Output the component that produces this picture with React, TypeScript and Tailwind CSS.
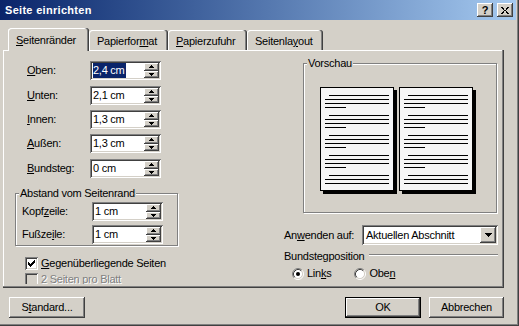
import React from "react";

// classic 3D bevels
const raised = "shadow-[inset_-1px_-1px_#404040,inset_1px_1px_#fff,inset_-2px_-2px_#808080]";
const sunken = "shadow-[inset_1px_1px_#808080,inset_-1px_-1px_#fff,inset_2px_2px_#404040,inset_-2px_-2px_#d4d0c8]";
const etched = "border border-[#808080] shadow-[1px_1px_#fff,inset_1px_1px_#fff]";

function UpArrow() {
  return (
    <svg width="5" height="3" shapeRendering="crispEdges">
      <rect x="2" y="0" width="1" height="1" fill="#000" />
      <rect x="1" y="1" width="3" height="1" fill="#000" />
      <rect x="0" y="2" width="5" height="1" fill="#000" />
    </svg>
  );
}

function DownArrow({ w = 5 }: { w?: number }) {
  if (w === 7) {
    return (
      <svg width="7" height="4" shapeRendering="crispEdges">
        <rect x="0" y="0" width="7" height="1" fill="#000" />
        <rect x="1" y="1" width="5" height="1" fill="#000" />
        <rect x="2" y="2" width="3" height="1" fill="#000" />
        <rect x="3" y="3" width="1" height="1" fill="#000" />
      </svg>
    );
  }
  return (
    <svg width="5" height="3" shapeRendering="crispEdges">
      <rect x="0" y="0" width="5" height="1" fill="#000" />
      <rect x="1" y="1" width="3" height="1" fill="#000" />
      <rect x="2" y="2" width="1" height="1" fill="#000" />
    </svg>
  );
}

function Spin({ value, selected }: { value: string; selected?: boolean }) {
  return (
    <div className={`flex h-[19px] w-[71px] bg-white p-[2px] ${sunken}`}>
      <div className="flex-1 pl-[1px] leading-[15px] whitespace-nowrap">
        {selected ? <span className="bg-[#0a246a] text-white inline-block h-[15px] pr-[1px]">{value}</span> : value}
      </div>
      <div className="flex w-[15px] flex-col">
        <div className={`flex flex-1 items-center justify-center bg-[#d4d0c8] ${raised}`}>
          <UpArrow />
        </div>
        <div className={`flex flex-1 items-center justify-center bg-[#d4d0c8] ${raised}`}>
          <DownArrow />
        </div>
      </div>
    </div>
  );
}

function Field({ label, value, selected, className = "" }: { label: React.ReactNode; value: string; selected?: boolean; className?: string }) {
  return (
    <div className={`flex h-[19px] items-center ${className}`}>
      <div className="w-[75px] pl-[12px]">{label}</div>
      <Spin value={value} selected={selected} />
    </div>
  );
}

function Check({ checked, disabled }: { checked?: boolean; disabled?: boolean }) {
  return (
    <div className={`relative h-[13px] w-[13px] shrink-0 ${disabled ? "bg-[#d4d0c8]" : "bg-white"} ${sunken}`}>
      {checked && (
        <svg width="13" height="13" className="absolute left-0 top-0" shapeRendering="crispEdges">
          <path d="M3 5h1v3h-1z M4 6h1v3h-1z M5 7h1v3h-1z M6 6h1v3h-1z M7 5h1v3h-1z M8 4h1v3h-1z M9 3h1v3h-1z" fill="#000" />
        </svg>
      )}
    </div>
  );
}

function Radio({ checked }: { checked?: boolean }) {
  return (
    <svg width="12" height="12" viewBox="0 0 12 12" className="shrink-0">
      <circle cx="6" cy="6" r="4.5" fill="#fff" />
      <path d="M2.11 9.89 A5.5 5.5 0 0 1 9.89 2.11" stroke="#808080" fill="none" />
      <path d="M9.89 2.11 A5.5 5.5 0 0 1 2.11 9.89" stroke="#fff" fill="none" />
      <path d="M2.82 9.18 A4.5 4.5 0 0 1 9.18 2.82" stroke="#404040" fill="none" />
      <path d="M9.18 2.82 A4.5 4.5 0 0 1 2.82 9.18" stroke="#d4d0c8" fill="none" />
      {checked && <circle cx="6" cy="6" r="2" fill="#000" />}
    </svg>
  );
}

function Tab({ children, active, className }: { children: React.ReactNode; active?: boolean; className: string }) {
  return (
    <div
      className={`rounded-t-[3px] bg-[#d4d0c8] pl-[8px] shadow-[inset_-1px_0_#404040,inset_-2px_0_#808080,inset_1px_1px_#fff] ${
        active ? "relative z-10 -mb-[1px] h-[23px] pt-[6px]" : "h-[20px] pt-[5px]"
      } ${className}`}
    >
      {children}
    </div>
  );
}

function Page() {
  const groups = [4, 4, 4, 4, 3];
  return (
    <div className="h-[104px] w-[74px] overflow-hidden border border-black bg-[#f6f6f6] pt-[7px] pl-[4px] shadow-[3px_3px_0_#000]">
      {groups.map((n, g) => (
        <div key={g} className="mb-[7px] flex flex-col gap-[3px]">
          <div className="ml-[4px] h-[1px] w-[60px] bg-black" />
          <div className="h-[1px] w-[64px] bg-black" />
          <div className="h-[1px] w-[64px] bg-black" />
          {n === 4 && <div className="h-[1px] w-[21px] bg-black" />}
        </div>
      ))}
    </div>
  );
}

function Button({ children, className = "", def }: { children: React.ReactNode; className?: string; def?: boolean }) {
  if (def) {
    return (
      <div className={`h-[21px] border border-black ${className}`}>
        <div className={`flex h-full items-center justify-center ${raised}`}>{children}</div>
      </div>
    );
  }
  return <div className={`flex h-[21px] items-center justify-center ${raised} ${className}`}>{children}</div>;
}

export default function App() {
  return (
    <div className="relative h-[326px] w-[519px] overflow-hidden bg-[#d4d0c8] font-['Liberation_Sans',Arial,sans-serif] text-[11px] leading-[13px] tracking-[-0.25px] text-black shadow-[inset_-1px_-1px_#404040,inset_-2px_-2px_#808080] select-none">
      {/* title bar */}
      <div className="flex h-[20px] w-[516px] items-center bg-linear-to-r from-[#0a246a] to-[#a6caf0] pl-[5px] pr-[3px]">
        <div className="flex-1 text-[11px] font-bold tracking-[0.3px] text-white">Seite einrichten</div>
        <div className={`flex h-[14px] w-[16px] items-center justify-center bg-[#d4d0c8] text-[11px] font-bold tracking-normal ${raised}`}>?</div>
        <div className={`ml-[4px] flex h-[14px] w-[16px] items-center justify-center bg-[#d4d0c8] ${raised}`}>
          <svg width="8" height="7" shapeRendering="crispEdges">
            <path d="M0 0h2v1h-2z M1 1h2v1h-2z M2 2h1v1h-1z M5 2h1v1h-1z M3 3h2v1h-2z M2 4h1v1h-1z M5 4h1v1h-1z M1 5h2v1h-2z M5 5h2v1h-2z M0 6h2v1h-2z M6 6h2v1h-2z M6 0h2v1h-2z M5 1h2v1h-2z" fill="#000" />
          </svg>
        </div>
      </div>

      <div className="pl-[3px] pr-[15px]">
        {/* tabs */}
        <div className="mt-[8px] flex h-[22px] items-end pl-[5px]">
          <Tab active className="w-[81px]">
            <u>S</u>eitenränder
          </Tab>
          <Tab className="w-[79px]">
            Papierfor<u>m</u>at
          </Tab>
          <Tab className="w-[79px]">
            <u>P</u>apierzufuhr
          </Tab>
          <Tab className="w-[76px]">
            Seitenla<u>y</u>out
          </Tab>
        </div>

        {/* panel */}
        <div className="flex h-[238px] w-[501px] shadow-[inset_-1px_-1px_#404040,inset_-2px_-2px_#808080,inset_1px_1px_#fff]">
          {/* left column */}
          <div className="flex w-[178px] flex-col pl-[12px] pt-[11px]">
            <Field label={<><u>O</u>ben:</>} value="2,4 cm" selected />
            <Field label={<><u>U</u>nten:</>} value="2,1 cm" className="mt-[6px]" />
            <Field label={<><u>I</u>nnen:</>} value="1,3 cm" className="mt-[5px]" />
            <Field label={<><u>A</u>ußen:</>} value="1,3 cm" className="mt-[5px]" />
            <Field label={<><u>B</u>undsteg:</>} value="0 cm" className="mt-[6px]" />

            <div className={`relative mt-[15px] h-[53px] w-[163px] pt-[8px] ${etched}`}>
              <span className="absolute -top-[7px] left-[3px] bg-[#d4d0c8] px-[1px]">Abstand vom Seitenrand</span>
              <div className="flex h-[19px] items-center">
                <div className="w-[76px] pl-[6px]">
                  Kopf<u>z</u>eile:
                </div>
                <Spin value="1 cm" />
              </div>
              <div className="mt-[4px] flex h-[19px] items-center">
                <div className="w-[76px] pl-[6px]">
                  Fußze<u>i</u>le:
                </div>
                <Spin value="1 cm" />
              </div>
            </div>

            <div className="ml-[10px] mt-[11px] flex items-center gap-[3px]">
              <Check checked />
              <span>
                <u>G</u>egenüberliegende Seiten
              </span>
            </div>
            <div className="ml-[10px] mt-[3px] h-[11px] overflow-hidden">
              <div className="flex items-center gap-[3px]">
                <Check disabled />
                <span className="text-[#808080] [text-shadow:1px_1px_#fff]">
                  <u>2</u> Seiten pro Blatt
                </span>
              </div>
            </div>
          </div>

          {/* right column */}
          <div className="ml-[103px] flex w-[214px] flex-col">
            <div className={`relative ml-[19px] mt-[13px] h-[150px] w-[194px] ${etched}`}>
              <span className="absolute -top-[7px] left-[3px] bg-[#d4d0c8] px-[1px]">Vorschau</span>
              <div className="flex gap-[5px] pl-[16px] pt-[23px]">
                <Page />
                <Page />
              </div>
            </div>

            <div className="mt-[12px] flex h-[20px] items-center">
              <div className="w-[78px]">
                An<u>w</u>enden auf:
              </div>
              <div className={`flex h-[20px] w-[136px] bg-white p-[2px] ${sunken}`}>
                <div className="flex-1 pl-[2px] leading-[16px]">Aktuellen Abschnitt</div>
                <div className={`flex w-[16px] items-center justify-center bg-[#d4d0c8] ${raised}`}>
                  <DownArrow w={7} />
                </div>
              </div>
            </div>

            <div className="mt-[5px] flex h-[13px] items-start">
              <span>Bundstegposition</span>
              <div className="ml-[5px] mt-[4px] h-[2px] flex-1 border-t border-[#808080] border-b border-b-white" />
            </div>

            <div className="mt-[4px] flex h-[13px] items-center">
              <div className="ml-[8px] flex items-center gap-[3px]">
                <Radio checked />
                <span>
                  Lin<u>k</u>s
                </span>
              </div>
              <div className="ml-[23px] flex items-center gap-[3px]">
                <Radio />
                <span>
                  Obe<u>n</u>
                </span>
              </div>
            </div>
          </div>
        </div>

        {/* buttons */}
        <div className="mt-[9px] flex">
          <Button className="ml-[6px] w-[76px]">
            S<u>t</u>andard...
          </Button>
          <div className="flex-1" />
          <Button def className="w-[76px]">
            OK
          </Button>
          <Button className="ml-[8px] w-[75px]">Abbrechen</Button>
        </div>
      </div>
    </div>
  );
}
